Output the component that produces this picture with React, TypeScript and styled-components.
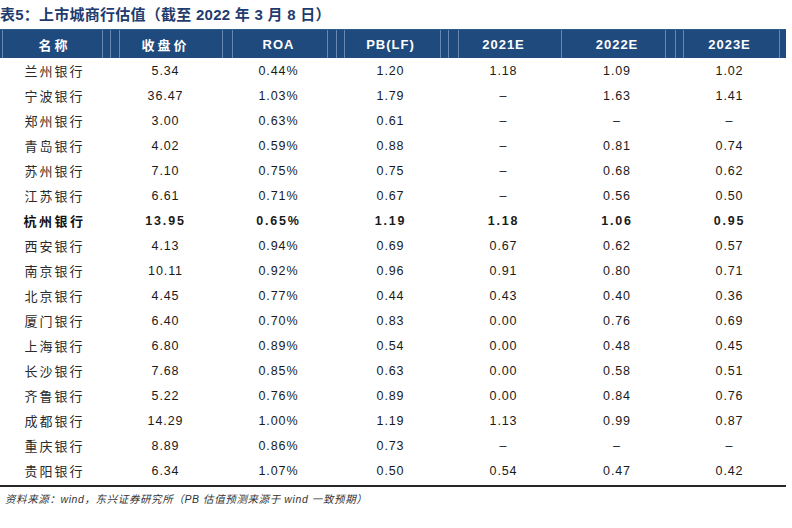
import React from "react";
import styled, { createGlobalStyle } from "styled-components";

const GlobalStyle = createGlobalStyle`
  html, body { margin: 0; padding: 0; background: #ffffff; }
  body { font-family: "Liberation Sans", "Noto Sans CJK SC", sans-serif; color: #1a1a1a; }
`;

const COLS = "109px 113px 113px 111px 115px 112px 113px";
const HEADER_LINES = [2, 102, 110, 119, 222, 232, 327, 336, 344, 440, 448, 458, 561, 665, 675, 683, 779];
const headerLines = HEADER_LINES.map(
  (x) => `linear-gradient(rgba(160,185,220,0.55), rgba(160,185,220,0.55)) ${x}px 0 / 1px 100% no-repeat`
).join(", ");

const Page = styled.div`
  width: 792px;
  height: 528px;
  overflow: hidden;
`;

const Title = styled.div`
  height: 29px;
  line-height: 29px;
  font-family: "Liberation Sans", "Noto Sans CJK SC", sans-serif;
  font-weight: 700;
  font-size: 15px;
  letter-spacing: 0.25px;
  color: #1f3c6e;
  white-space: nowrap;
`;

const Table = styled.div`
  width: 786px;
  display: flex;
  flex-direction: column;
`;

const HeaderRow = styled.div`
  display: grid;
  grid-template-columns: ${COLS};
  height: 28px;
  background: ${headerLines}, #1f4a7e;
  border-top: 1px solid #2e5a8c;
`;

const HeadCell = styled.div<{ $cjk?: boolean }>`
  display: flex;
  align-items: center;
  justify-content: center;
  color: #ffffff;
  font-weight: 700;
  font-size: 13px;
  letter-spacing: ${(p) => (p.$cjk ? "3px" : "1px")};
  font-family: ${(p) =>
    p.$cjk ? `"Noto Sans CJK SC", sans-serif` : `"Liberation Sans", sans-serif`};
`;

const Row = styled.div`
  display: grid;
  grid-template-columns: ${COLS};
  height: 25px;
`;

const NameCell = styled.div<{ $bold?: boolean }>`
  display: flex;
  align-items: center;
  justify-content: center;
  font-family: "Noto Sans CJK SC", sans-serif;
  font-size: 13px;
  letter-spacing: ${(p) => (p.$bold ? "2.5px" : "2px")};
  font-weight: ${(p) => (p.$bold ? 700 : 400)};
  color: ${(p) => (p.$bold ? "#111" : "#2a2a2a")};
`;

const NumCell = styled.div<{ $bold?: boolean }>`
  display: flex;
  align-items: center;
  justify-content: center;
  font-family: "Liberation Sans", sans-serif;
  font-size: 12.5px;
  letter-spacing: ${(p) => (p.$bold ? "1.8px" : "0.9px")};
  font-weight: ${(p) => (p.$bold ? 700 : 400)};
  color: #1a1a1a;
`;

const BottomRule = styled.div`
  height: 2px;
  background: #262626;
  margin-top: 2px;
`;

const Source = styled.div`
  padding-left: 5px;
  margin-top: 4px;
  font-style: italic;
  font-size: 10.5px;
  letter-spacing: 0.6px;
  color: #333;
  font-family: "Liberation Sans", "Noto Sans CJK SC", sans-serif;
  white-space: nowrap;
`;

type RowData = [string, string, string, string, string, string, string];

const rows: RowData[] = [
  ["兰州银行", "5.34", "0.44%", "1.20", "1.18", "1.09", "1.02"],
  ["宁波银行", "36.47", "1.03%", "1.79", "–", "1.63", "1.41"],
  ["郑州银行", "3.00", "0.63%", "0.61", "–", "–", "–"],
  ["青岛银行", "4.02", "0.59%", "0.88", "–", "0.81", "0.74"],
  ["苏州银行", "7.10", "0.75%", "0.75", "–", "0.68", "0.62"],
  ["江苏银行", "6.61", "0.71%", "0.67", "–", "0.56", "0.50"],
  ["杭州银行", "13.95", "0.65%", "1.19", "1.18", "1.06", "0.95"],
  ["西安银行", "4.13", "0.94%", "0.69", "0.67", "0.62", "0.57"],
  ["南京银行", "10.11", "0.92%", "0.96", "0.91", "0.80", "0.71"],
  ["北京银行", "4.45", "0.77%", "0.44", "0.43", "0.40", "0.36"],
  ["厦门银行", "6.40", "0.70%", "0.83", "0.00", "0.76", "0.69"],
  ["上海银行", "6.80", "0.89%", "0.54", "0.00", "0.48", "0.45"],
  ["长沙银行", "7.68", "0.85%", "0.63", "0.00", "0.58", "0.51"],
  ["齐鲁银行", "5.22", "0.76%", "0.89", "0.00", "0.84", "0.76"],
  ["成都银行", "14.29", "1.00%", "1.19", "1.13", "0.99", "0.87"],
  ["重庆银行", "8.89", "0.86%", "0.73", "–", "–", "–"],
  ["贵阳银行", "6.34", "1.07%", "0.50", "0.54", "0.47", "0.42"],
];

const headers: { label: string; cjk?: boolean }[] = [
  { label: "名称", cjk: true },
  { label: "收盘价", cjk: true },
  { label: "ROA" },
  { label: "PB(LF)" },
  { label: "2021E" },
  { label: "2022E" },
  { label: "2023E" },
];

export default function App() {
  return (
    <Page>
      <GlobalStyle />
      <Title>表5：上市城商行估值（截至 2022 年 3 月 8 日）</Title>
      <Table>
        <HeaderRow>
          {headers.map((h) => (
            <HeadCell key={h.label} $cjk={h.cjk}>
              {h.label}
            </HeadCell>
          ))}
        </HeaderRow>
        {rows.map((r) => {
          const bold = r[0] === "杭州银行";
          return (
            <Row key={r[0]}>
              <NameCell $bold={bold}>{r[0]}</NameCell>
              {r.slice(1).map((v, i) => (
                <NumCell key={i} $bold={bold}>
                  {v}
                </NumCell>
              ))}
            </Row>
          );
        })}
        <BottomRule />
      </Table>
      <Source>资料来源：wind，东兴证券研究所（PB 估值预测来源于 wind 一致预期）</Source>
    </Page>
  );
}
